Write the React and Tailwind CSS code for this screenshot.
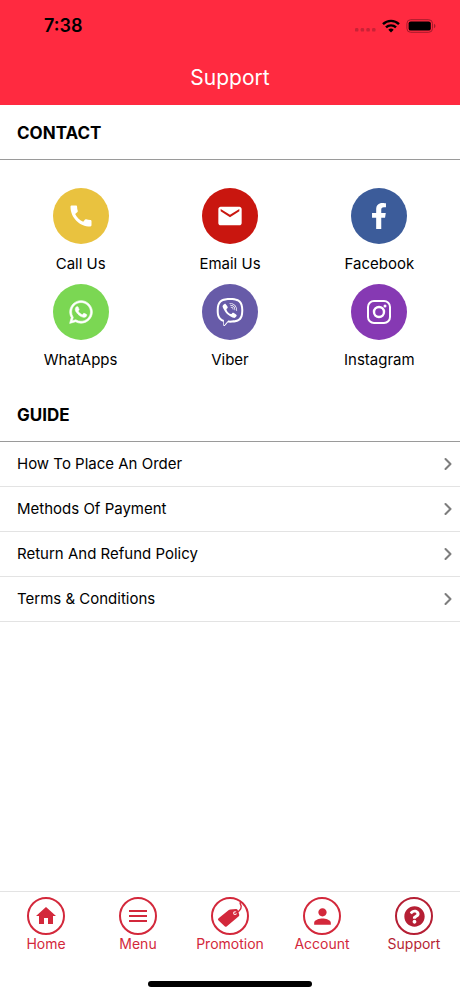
import React from 'react';
import { MdCall, MdEmail, MdHome, MdPerson, MdMenu } from 'react-icons/md';
import { FaFacebookF, FaWhatsapp, FaViber, FaQuestionCircle } from 'react-icons/fa';
import { ChevronRight } from 'lucide-react';

const InstagramIcon = () => (
  <svg width="26" height="26" viewBox="0 0 26 26" fill="none" stroke="currentColor" strokeWidth="2">
    <rect x="2" y="2" width="22" height="22" rx="6" />
    <circle cx="13" cy="13" r="5" strokeWidth="2.4" />
    <circle cx="19" cy="7" r="1.5" fill="currentColor" stroke="none" />
  </svg>
);

const TagIcon = () => (
  <svg width="38" height="38" viewBox="0 0 38 38" className="shrink-0 overflow-visible">
    <path
      fill="currentColor"
      fillRule="evenodd"
      d="M7.6 21.2 17.8 13Q18.4 12.5 19.3 12.4L25 12.1Q26.4 12.1 26.8 13.3L28.2 17.6Q28.5 18.6 27.8 19.3L15.6 29.4Q14.4 30.3 13.4 29.1L7.3 23.3Q6.4 22.2 7.6 21.2ZM24 14.2a1.9 1.9 0 1 0 .01 3.8a1.9 1.9 0 0 0-.01-3.8Z"
    />
    <path
      d="M23.8 16.2C27 15.6 30.4 12.6 30.2 9.4C30 7.6 28.4 6.8 29.4 5"
      fill="none"
      stroke="currentColor"
      strokeWidth="1.4"
      strokeLinecap="round"
    />
  </svg>
);

const contacts = [
  { label: 'Call Us', color: 'bg-[#e9c23f]', icon: <MdCall size={28} /> },
  { label: 'Email Us', color: 'bg-[#c9160f]', icon: <MdEmail size={28} /> },
  { label: 'Facebook', color: 'bg-[#3c5c9a]', icon: <FaFacebookF size={26} /> },
  { label: 'WhatApps', color: 'bg-[#7bd753]', icon: <FaWhatsapp size={26} stroke="currentColor" strokeWidth={12} /> },
  { label: 'Viber', color: 'bg-[#675ba8]', icon: <FaViber size={28} /> },
  { label: 'Instagram', color: 'bg-[#8639b3]', icon: <InstagramIcon /> },
];

const guides = ['How To Place An Order', 'Methods Of Payment', 'Return And Refund Policy', 'Terms & Conditions'];

const tabs = [
  { label: 'Home', color: 'text-[#d3283b]', icon: <MdHome size={24} /> },
  { label: 'Menu', color: 'text-[#d3283b]', icon: <MdMenu size={24} /> },
  { label: 'Promotion', color: 'text-[#d3283b]', icon: <TagIcon /> },
  { label: 'Account', color: 'text-[#d3283b]', icon: <MdPerson size={25} /> },
  { label: 'Support', color: 'text-[#b51f34]', icon: <FaQuestionCircle size={21} />, active: true },
];

const StatusBar = () => (
  <div className="flex h-[52px] items-center justify-between pl-11 pr-6 text-black">
    <span className="text-lg font-semibold">7:38</span>
    <div className="flex items-center gap-1.5">
      <svg width="22" height="14" viewBox="0 0 22 14" fill="#c92236">
        <rect x="1" y="9" width="3.4" height="3.6" rx="1.2" />
        <rect x="6.7" y="9" width="3.4" height="3.6" rx="1.2" />
        <rect x="12.4" y="9" width="3.4" height="3.6" rx="1.2" />
        <rect x="18.1" y="9" width="3.4" height="3.6" rx="1.2" />
      </svg>
      <svg width="18" height="14" viewBox="0 0 18 14" fill="none" stroke="currentColor" strokeWidth="2.4">
        <path d="M1 5.2a11.4 11.4 0 0 1 16 0" />
        <path d="M4 8.4a7.1 7.1 0 0 1 10 0" />
        <path d="M9 13.6 6.3 10.8a3.8 3.8 0 0 1 5.4 0Z" fill="currentColor" stroke="none" />
      </svg>
      <svg width="30" height="14" viewBox="0 0 30 14">
        <rect x="0.9" y="0.7" width="25.6" height="12.6" rx="3.8" fill="none" stroke="#a51b2b" />
        <rect x="2.6" y="2.4" width="22.2" height="9.2" rx="2.2" fill="currentColor" />
        <path d="M28 4.8c2 .8 2 3.6 0 4.4Z" fill="#a51b2b" />
      </svg>
    </div>
  </div>
);

const SectionTitle = ({ children }) => (
  <h2 className="border-b border-[#9a9a9a] px-[17px] pt-4 pb-[14px] text-[17px] leading-6 font-bold">{children}</h2>
);

const App = () => {
  return (
    <div className="flex min-h-screen flex-col bg-white font-[Inter,sans-serif] text-black">
      {/* Header */}
      <header className="bg-[#ff2a40]">
        <StatusBar />
        <h1 className="pt-3 pb-[13px] text-center text-[21px] leading-7 text-white">Support</h1>
      </header>

      <main className="flex-1">
        <section>
          <SectionTitle>CONTACT</SectionTitle>
          <div className="grid grid-cols-3 gap-y-2 px-1.5 pt-7 pb-[15px]">
            {contacts.map((item) => (
              <button key={item.label} type="button" className="flex flex-col items-center gap-2">
                <span className={`flex size-14 items-center justify-center rounded-full text-white ${item.color}`}>
                  {item.icon}
                </span>
                <span className="text-[15px] leading-6">{item.label}</span>
              </button>
            ))}
          </div>
        </section>

        <section>
          <SectionTitle>GUIDE</SectionTitle>
          <ul>
            {guides.map((guide) => (
              <li key={guide} className="border-b border-[#e3e3e3]">
                <a href="#" className="flex h-11 items-center justify-between pr-0.5 pl-[17px] text-[15px]">
                  {guide}
                  <ChevronRight size={20} strokeWidth={2.5} className="text-[#7d7d7d]" />
                </a>
              </li>
            ))}
          </ul>
        </section>
      </main>

      {/* Bottom tabs */}
      <footer className="border-t border-[#e3e3e3]">
        <nav className="grid grid-cols-5 pt-[5px]">
          {tabs.map((tab) => (
            <a
              key={tab.label}
              href="#"
              aria-current={tab.active ? 'page' : undefined}
              className={`flex flex-col items-center ${tab.color}`}
            >
              <span className="flex size-[38px] items-center justify-center rounded-full border-2 border-current">
                {tab.icon}
              </span>
              <span className="text-sm leading-[18px]">{tab.label}</span>
            </a>
          ))}
        </nav>
        <div className="mx-auto mt-7 mb-[9px] h-1.5 w-[164px] rounded-full bg-black" />
      </footer>
    </div>
  );
};

export default App;
